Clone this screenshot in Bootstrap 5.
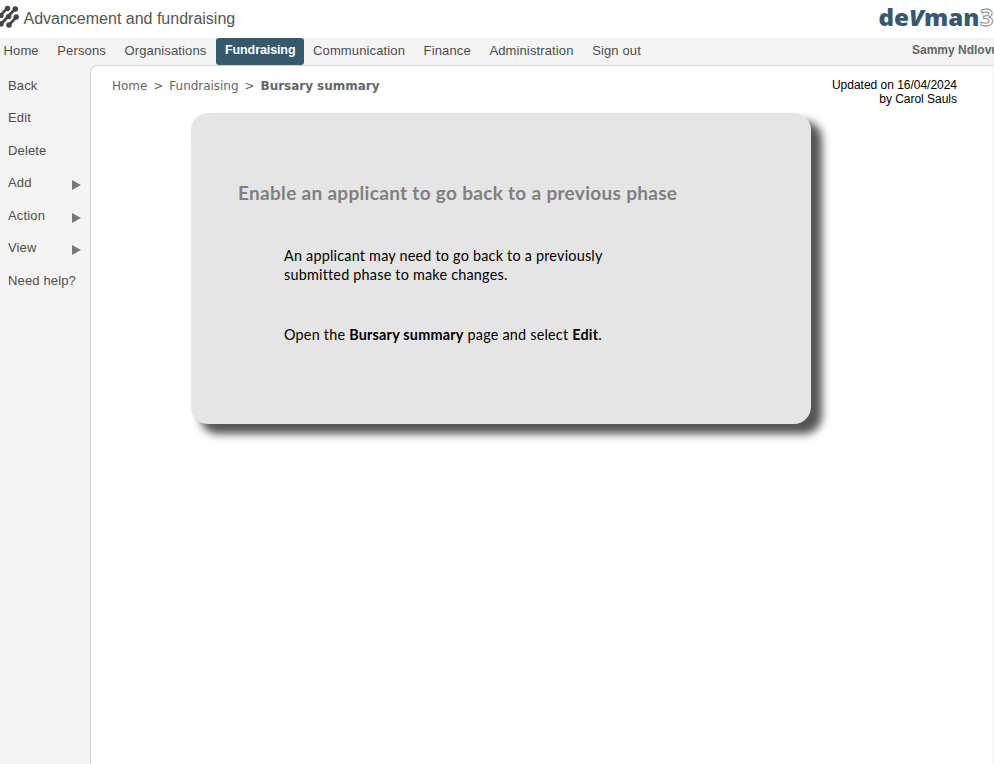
<!DOCTYPE html>
<html lang="en">
<head>
<meta charset="utf-8">
<meta name="viewport" content="width=device-width, initial-scale=1">
<title>Bursary summary</title>
<link rel="stylesheet" href="https://cdn.jsdelivr.net/npm/bootstrap@5.3.0/dist/css/bootstrap.min.css">
<style>
body{font-family:"Liberation Sans",Arial,sans-serif;font-size:13px;line-height:16px;color:#4d4d4d;background:#f4f4f4}
.topbar{height:38px;background:#fff}
.app-title{font-size:16px;line-height:20px;color:#555;margin:9px 0 0 3.5px;letter-spacing:0}
.mainnav{height:27px;padding-left:3.5px}
.mainnav .nav-link{padding:0;margin-right:18.6px;line-height:25px;color:#4d4d4d;letter-spacing:.13px;white-space:nowrap}
.mainnav .nav-link.active{background:#365a6b;color:#fff;font-weight:700;border-radius:3px;padding:0 9px;margin:0 9px 0 -9px;font-size:12.5px;letter-spacing:-.1px;width:88px;height:27px}
.user-name{font:bold 12px/24px "Liberation Sans",Arial,sans-serif;color:#666;letter-spacing:0;width:82px}
.sidemenu{width:90px;padding:12.6px 9px 0 8px}
.sidemenu a{color:#4d4d4d;height:32.5px;letter-spacing:.15px;white-space:nowrap}
.sidemenu svg{margin-top:5px}
.content{border:1px solid #d3d3d3;border-right-color:#eee;border-bottom:0;border-top-left-radius:7px;height:699px}
.crumbs{font:12px/16px "DejaVu Sans",Verdana,sans-serif;color:#666;margin:12px 0 0 21px;letter-spacing:-.03px}
.crumbs span{margin:0 6px}
.updated{font-size:12px;line-height:14px;color:#000;margin:12px 36px 0 0;width:140px;letter-spacing:-.02px}
.notice{width:620px;height:311px;margin:7px 0 0 100px;border-radius:17px;background:#e5e5e5;box-shadow:10px 9px 9px 1px #555;padding:67px 47px;font-family:Lato,sans-serif;color:#000}
.notice h1{font-size:19px;line-height:26px;font-weight:700;color:#808080;margin:0 0 40px;letter-spacing:.31px;white-space:nowrap}
.notice p{font-size:14.4px;line-height:19px;margin:0 0 41px 46px;letter-spacing:.21px;white-space:nowrap}
</style>
<script src="https://cdn.jsdelivr.net/npm/bootstrap@5.3.0/dist/js/bootstrap.bundle.min.js"></script>
</head>
<body class="vh-100 overflow-hidden">
<header class="topbar d-flex">
  <svg class="flex-shrink-0" width="20" height="30" viewBox="0 0 20 30">
    <g stroke="#444" stroke-width="2.6" fill="none"><path d="M-1 17L7.500 8M1 24L8.500 16L15 9M9 25L16.500 17"/></g>
    <g fill="#444"><circle cx="7.500" cy="8.500" r="2.7"/><circle cx="15.300" cy="9" r="2.8"/><circle cx="1" cy="15.500" r="2.600"/><circle cx="8.700" cy="16.500" r="2.700"/><circle cx="16.200" cy="17" r="2.700"/><circle cx="1" cy="24" r="2.700"/><circle cx="9" cy="25" r="2.800"/></g>
  </svg>
  <div class="app-title">Advancement and fundraising</div>
  <svg class="ms-auto flex-shrink-0" width="118" height="38" viewBox="876 0 118 38" font-family="'Open Sans',sans-serif" font-weight="800" font-size="23.500">
    <text x="878.500" y="26" fill="#365a6b" textLength="101" lengthAdjust="spacingAndGlyphs">de<tspan font-style="italic">V</tspan>man</text>
    <text x="980" y="26" font-weight="700" fill="#fff" stroke="#777" stroke-width=".8">3</text>
  </svg>
</header>
<div class="d-flex justify-content-between">
  <nav class="mainnav nav flex-nowrap">
    <a class="nav-link" href="#">Home</a><a class="nav-link" href="#">Persons</a><a class="nav-link" href="#">Organisations</a><a class="nav-link active" href="#">Fundraising</a><a class="nav-link" href="#">Communication</a><a class="nav-link" href="#">Finance</a><a class="nav-link" href="#">Administration</a><a class="nav-link" href="#">Sign out</a>
  </nav>
  <div class="user-name text-nowrap">Sammy Ndlovu</div>
</div>
<div class="d-flex">
  <aside class="sidemenu d-flex flex-column flex-shrink-0">
    <a class="text-decoration-none" href="#">Back</a>
    <a class="text-decoration-none" href="#">Edit</a>
    <a class="text-decoration-none" href="#">Delete</a>
    <a class="text-decoration-none d-flex justify-content-between" href="#">Add<svg width="9" height="10"><path d="M0 0L9 5L0 10Z" fill="#777"/></svg></a>
    <a class="text-decoration-none d-flex justify-content-between" href="#">Action<svg width="9" height="10"><path d="M0 0L9 5L0 10Z" fill="#777"/></svg></a>
    <a class="text-decoration-none d-flex justify-content-between" href="#">View<svg width="9" height="10"><path d="M0 0L9 5L0 10Z" fill="#777"/></svg></a>
    <a class="text-decoration-none" href="#">Need help?</a>
  </aside>
  <main class="content flex-grow-1 bg-white">
    <div class="d-flex justify-content-between">
      <div class="crumbs">Home<span>&gt;</span>Fundraising<span>&gt;</span><b>Bursary summary</b></div>
      <div class="updated text-end text-nowrap">Updated on 16/04/2024<br>by Carol Sauls</div>
    </div>
    <section class="notice">
      <h1>Enable an applicant to go back to a previous phase</h1>
      <p>An applicant may need to go back to a previously<br>submitted phase to make changes.</p>
      <p>Open the <b>Bursary summary</b> page and select <b>Edit</b>.</p>
    </section>
  </main>
</div>
</body>
</html>
